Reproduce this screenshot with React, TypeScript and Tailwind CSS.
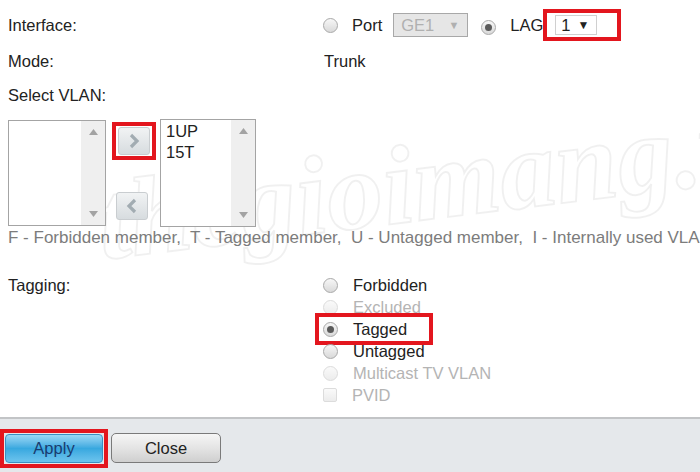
import React from "react";

function Radio({ checked = false, disabled = false }: { checked?: boolean; disabled?: boolean }) {
  return (
    <span
      className={
        "relative inline-flex h-[15px] w-[15px] shrink-0 items-center justify-center rounded-full border " +
        (disabled
          ? "border-[#dcdcdc] bg-gradient-to-b from-[#fafafa] to-[#ececec]"
          : "border-[#a9a9a9] bg-gradient-to-b from-[#f7f7f7] to-[#d9d9d9]")
      }
    >
      {checked && <span className="h-[7px] w-[7px] rounded-full bg-[#5a5a5a]" />}
    </span>
  );
}

function Arrow({ dir }: { dir: "up" | "down" }) {
  return (
    <svg width="9" height="6" viewBox="0 0 9 6">
      {dir === "up" ? (
        <polygon points="0,6 9,6 4.5,0" fill="#a3a3a3" />
      ) : (
        <polygon points="0,0 9,0 4.5,6" fill="#a3a3a3" />
      )}
    </svg>
  );
}

function ListBox({ items, className }: { items: string[]; className: string }) {
  return (
    <div className={"flex border border-[#a4a4a4] bg-white " + className}>
      <div className="flex-1 pl-[5px] pt-[1px] text-[16.5px] leading-[21px] text-[#222]">
        {items.map((t) => (
          <div key={t}>{t}</div>
        ))}
      </div>
      <div className="flex w-[24px] flex-col items-center justify-between bg-[#efefef] py-[8px]">
        <Arrow dir="up" />
        <Arrow dir="down" />
      </div>
    </div>
  );
}

function MoveButton({ dir }: { dir: "right" | "left" }) {
  return (
    <div className="flex h-[28px] w-[32px] items-center justify-center rounded-[3px] border border-[#c9cdd0] bg-gradient-to-b from-[#f1f3f4] to-[#d7dcdf]">
      <svg width="14" height="16" viewBox="0 0 14 16">
        {dir === "right" ? (
          <polyline points="4,2 10,8 4,14" fill="none" stroke="#a2acb2" strokeWidth="3.2" />
        ) : (
          <polyline points="10,2 4,8 10,14" fill="none" stroke="#a2acb2" strokeWidth="3.2" />
        )}
      </svg>
    </div>
  );
}

function Option({
  label,
  checked = false,
  disabled = false,
  boxed = false,
  checkbox = false,
}: {
  label: string;
  checked?: boolean;
  disabled?: boolean;
  boxed?: boolean;
  checkbox?: boolean;
}) {
  return (
    <div className="relative flex h-[22px] items-center">
      {boxed && (
        <div className="pointer-events-none absolute left-[-8px] top-[-5px] h-[32px] w-[118px] border-[4px] border-[#e3161e]" />
      )}
      {checkbox ? (
        <span className="h-[14px] w-[14px] shrink-0 rounded-[2px] border border-[#dcdcdc] bg-gradient-to-b from-[#fafafa] to-[#ececec]" />
      ) : (
        <Radio checked={checked} disabled={disabled} />
      )}
      <span className={"ml-[15px] " + (disabled ? "text-[#b4b4b4]" : "text-[#222]")}>{label}</span>
    </div>
  );
}

export default function App() {
  return (
    <div className="relative flex h-[472px] w-[700px] flex-col overflow-hidden bg-white font-['Liberation_Sans',Arial,sans-serif] text-[16.5px] text-[#222]">
      {/* Watermark */}
      <div className="pointer-events-none absolute left-[95px] top-[122px] rotate-[-7deg] select-none whitespace-nowrap font-['Liberation_Serif',serif] text-[112px] font-bold italic leading-none text-transparent [-webkit-text-stroke:2px_rgba(0,0,0,0.06)]">
        thegioimang.vn
      </div>

      <div className="relative flex-1 pl-[8px]">
        {/* Interface row */}
        <div className="flex h-[50px] items-center">
          <div className="w-[315px]">Interface:</div>
          <Radio />
          <span className="ml-[14px]">Port</span>
          <div className="ml-[11px] flex h-[24px] w-[75px] items-center justify-between border border-[#a8a8a8] bg-[#e6e6e6] pl-[7px] pr-[8px] text-[#b0b0b0]">
            <span>GE1</span>
            <span className="text-[11px]">▼</span>
          </div>
          <span className="ml-[13px]">
            <Radio checked />
          </span>
          <span className="ml-[14px]">LAG</span>
          <div className="flex h-[32px] w-[78px] items-center border-[4px] border-[#e3161e] pl-[8px]">
            <div className="flex h-[20px] w-[42px] items-center gap-[7px] border border-[#d0d0d0] bg-white pl-[5px] text-[#222]">
              <span>1</span>
              <span className="text-[12px]">▼</span>
            </div>
          </div>
        </div>
        {/* Mode row */}
        <div className="flex h-[22px] items-center pt-[1px]">
          <div className="w-[316px]">Mode:</div>
          <span>Trunk</span>
        </div>
        {/* Select VLAN */}
        <div className="mt-[12px] flex h-[22px] items-center">Select VLAN:</div>

        {/* Lists */}
        <div className="mt-[13px] flex items-start">
          <ListBox items={[]} className="mt-[1px] h-[106px] w-[98px]" />
          <div className="ml-[6px] flex w-[44px] flex-col items-start pt-[3px]">
            <div className="flex h-[38px] w-[44px] items-center justify-center border-[4px] border-[#e3161e]">
              <MoveButton dir="right" />
            </div>
            <div className="ml-[4px] mt-[32px]">
              <MoveButton dir="left" />
            </div>
          </div>
          <ListBox items={["1UP", "15T"]} className="ml-[4px] h-[108px] w-[96px]" />
        </div>

        {/* Legend */}
        <div className="mt-[1px] h-[20px] whitespace-pre text-[17px] leading-[20px] text-[#7c7c7c]">
          {"F - Forbidden member,  T - Tagged member,  U - Untagged member,  I - Internally used VLAN"}
        </div>

        {/* Tagging */}
        <div className="mt-[26px] flex items-start">
          <div className="flex h-[22px] w-[315px] items-center">Tagging:</div>
          <div className="flex flex-col">
            <Option label="Forbidden" />
            <Option label="Excluded" disabled />
            <Option label="Tagged" checked boxed />
            <Option label="Untagged" />
            <Option label="Multicast TV VLAN" disabled />
            <Option label="PVID" disabled checkbox />
          </div>
        </div>
      </div>

      {/* Footer */}
      <div className="relative flex h-[55px] items-start gap-[3px] border-t-2 border-[#c2c4c6] bg-[#e5e8eb] pt-[10px]">
        <div className="flex h-[39px] w-[108px] items-center justify-center border-[4px] border-[#e3161e]">
          <button className="flex h-[29px] w-[98px] items-center justify-center rounded-[4px] border border-[#3a8fc2] bg-gradient-to-b from-[#9ad9f6] via-[#37a8df] to-[#6cc4ee] text-[16.5px] text-[#1a3c70]">
            Apply
          </button>
        </div>
        <button className="mt-[4px] flex h-[30px] w-[110px] items-center justify-center rounded-[5px] border border-[#7a7a7a] bg-gradient-to-b from-[#f6f6f6] via-[#e4e4e4] to-[#cfcfcf] text-[16.5px] text-[#222]">
          Close
        </button>
      </div>
    </div>
  );
}
